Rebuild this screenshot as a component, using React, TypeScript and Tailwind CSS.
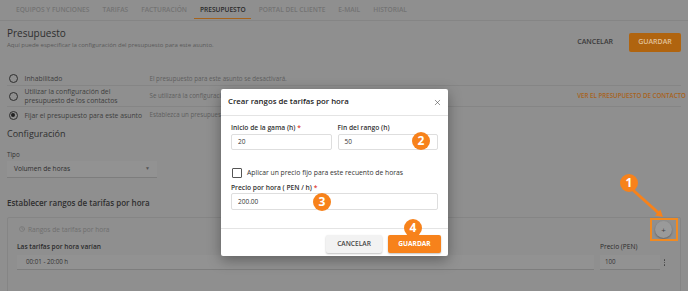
import { Clock, X } from "lucide-react";

const TABS = [
	"Equipos y funciones",
	"Tarifas",
	"Facturación",
	"Presupuesto",
	"Portal del cliente",
	"E-mail",
	"Historial",
];

const ACTIVE_TAB = "Presupuesto";

type RadioRowProps = {
	label: React.ReactNode;
	hint: string;
	checked?: boolean;
	className?: string;
	extra?: React.ReactNode;
};

function RadioRow({ label, hint, checked = false, className = "", extra }: RadioRowProps) {
	return (
		<div className={`flex items-center ${className}`}>
			<span className="ml-[1.5px] flex h-[9px] w-[9px] shrink-0 items-center justify-center rounded-full border-[1.2px] border-[#2e2e2e]">
				{checked && <span className="h-[4px] w-[4px] rounded-full bg-[#222]" />}
			</span>
			<span className="ml-[7px] w-[124px] shrink-0 text-[6.8px] leading-[9px] text-[#3e3e3e]">{label}</span>
			<span className="ml-[1px] whitespace-nowrap text-[6.2px] text-[#5e5e5e]">{hint}</span>
			{extra}
		</div>
	);
}

// numbered orange markers drawn over the screenshot
function Badge({ n, className }: { n: number; className: string }) {
	return (
		<span
			className={`absolute flex h-[18px] w-[18px] items-center justify-center rounded-full bg-[#f7821b] text-[12px] font-bold leading-none text-white ${className}`}
		>
			{n}
		</span>
	);
}

function ModalInput({ value, tall }: { value: string; tall?: boolean }) {
	return (
		<div
			className={`flex items-center rounded-[2px] border border-[#dedede] px-[6px] text-[6.5px] text-[#333] ${
				tall ? "h-[17px]" : "h-[16px]"
			}`}
		>
			{value}
		</div>
	);
}

function ModalLabel({ children, required }: { children: React.ReactNode; required?: boolean }) {
	return (
		<div className="text-[6.7px] font-semibold leading-[8px] text-[#333]">
			{children}
			{required && <span className="text-[#e0413a]"> *</span>}
		</div>
	);
}

export default function App() {
	return (
		<div className="relative h-[291px] w-[688px] overflow-hidden bg-[#8f8f8f] font-['Open_Sans',sans-serif]">
			{/* dimmed page underneath */}
			<div className="flex h-[21px] items-center gap-[13px] border-b border-[#858585] px-[16px]">
				{TABS.map((tab) => (
					<div
						key={tab}
						className={`relative flex h-full items-center text-[6.6px] font-semibold uppercase ${
							tab === ACTIVE_TAB ? "text-[#2a2a2a]" : "text-[#737373]"
						}`}
					>
						{tab}
						{tab === ACTIVE_TAB && (
							<span className="absolute -left-[6px] -right-[5px] bottom-[1px] h-[1.5px] bg-[#a5631c]" />
						)}
					</div>
				))}
			</div>

			<div className="flex items-start justify-between px-[7px] pt-[5px]">
				<div>
					<div className="text-[10px] leading-[14px] text-[#2e2e2e]">Presupuesto</div>
					<div className="mt-[1px] text-[6px] leading-[8px] text-[#5a5a5a]">
						Aquí puede especificar la configuración del presupuesto para este asunto.
					</div>
				</div>
				<div className="mt-[7px] flex items-center gap-[16px]">
					<span className="text-[7px] font-semibold text-[#3a3a3a]">CANCELAR</span>
					<span className="flex h-[19px] w-[52px] items-center justify-center rounded-[2px] bg-[#b0640f] text-[7px] font-semibold text-[#e2c29c]">
						GUARDAR
					</span>
				</div>
			</div>

			<div className="mx-[7px] mt-[20px]">
				<RadioRow className="h-[14px] border-b border-[#858585]" label="Inhabilitado" hint="El presupuesto para este asunto se desactivará." />
				<RadioRow
					className="h-[21px] border-b border-[#858585]"
					label={
						<>
							Utilizar la configuración del
							<br />
							presupuesto de los contactos
						</>
					}
					hint="Se utilizará la configuración del presupuesto de los contactos."
					extra={
						<span className="-mr-[5px] ml-auto self-start pt-[5px] text-[6.2px] font-semibold text-[#a8621b]">
							VER EL PRESUPUESTO DE CONTACTO
						</span>
					}
				/>
				<RadioRow
					className="h-[16px]"
					checked
					label="Fijar el presupuesto para este asunto"
					hint="Establezca un presupuesto para este asunto."
				/>
			</div>

			<div className="px-[7px]">
				<div className="mt-[5px] text-[9px] leading-[12px] text-[#2e2e2e]">Configuración</div>
				<div className="mt-[11px] text-[6.3px] leading-[8px] text-[#333]">Tipo</div>
				<div className="mt-[2px] flex h-[17px] w-[150px] items-center justify-between border-b border-[#7d7d7d] bg-[#929292] px-[7px] text-[6.6px] text-[#2e2e2e]">
					<span>Volumen de horas</span>
					<span className="text-[5px] text-[#555]">▼</span>
				</div>
				<div className="mt-[19px] text-[8px] font-semibold leading-[11px] text-[#2e2e2e]">
					Establecer rangos de tarifas por hora
				</div>
			</div>

			<div className="mx-[7px] mt-[9px] h-[120px] rounded-[2px] border border-[#858585] pl-[9px] pr-[14px] pt-[3px]">
				<div className="flex h-[17px] items-center justify-between">
					<div className="flex items-center gap-[3px] pl-[2px] text-[6.6px] text-[#6e6e6e]">
						<Clock size={6} strokeWidth={2} />
						Rangos de tarifas por hora
					</div>
					<span className="-mr-[6px] flex h-[17px] w-[17px] items-center justify-center rounded-full bg-[#9a9a9a] text-[8px] leading-none text-[#444] shadow-[0_1px_2px_rgba(0,0,0,0.3)]">
						+
					</span>
				</div>
				<div className="mt-[5px] flex items-end">
					<div className="flex-1">
						<div className="text-[6.6px] font-semibold leading-[8px] text-[#2a2a2a]">Las tarifas por hora varían</div>
						<div className="mt-[4px] flex h-[15px] items-center border-b border-[#7d7d7d] bg-[#929292] px-[9px] text-[6.2px] text-[#333]">
							00:01 - 20:00 h
						</div>
					</div>
					<div className="ml-[6px] w-[60px]">
						<div className="text-[6.6px] leading-[8px] text-[#2a2a2a]">Precio (PEN)</div>
						<div className="mt-[4px] flex h-[15px] items-center border-b border-[#7d7d7d] bg-[#929292] px-[5px] text-[6.2px] text-[#333]">
							100
						</div>
					</div>
					<div className="ml-[3px] flex h-[15px] w-[3px] flex-col items-center justify-center gap-[1px]">
						<span className="h-[1.5px] w-[1.5px] rounded-full bg-[#444]" />
						<span className="h-[1.5px] w-[1.5px] rounded-full bg-[#444]" />
						<span className="h-[1.5px] w-[1.5px] rounded-full bg-[#444]" />
					</div>
				</div>
			</div>

			{/* modal */}
			<div className="absolute left-[221px] top-[89px] flex w-[227px] flex-col rounded-[2px] bg-white shadow-[0_4px_14px_rgba(0,0,0,0.35)]">
				<div className="flex h-[27px] items-center justify-between border-b border-[#e4e4e4] pl-[7px] pr-[6px]">
					<span className="text-[7.8px] font-semibold text-[#222]">Crear rangos de tarifas por hora</span>
					<X size={9} strokeWidth={1.5} className="text-[#444]" />
				</div>
				<div className="px-[10px] pb-[18px] pt-[8px]">
					<div className="grid grid-cols-2 gap-x-[6px]">
						<div>
							<ModalLabel required>Inicio de la gama (h)</ModalLabel>
							<div className="mt-[2px]">
								<ModalInput value="20" />
							</div>
						</div>
						<div>
							<ModalLabel>Fin del rango (h)</ModalLabel>
							<div className="mt-[2px]">
								<ModalInput value="50" />
							</div>
						</div>
					</div>
					<div className="mt-[18px] flex items-center gap-[5px] pl-[1px]">
						<span className="h-[10px] w-[10px] rounded-[1px] border border-[#555]" />
						<span className="text-[6.8px] text-[#333]">Aplicar un precio fijo para este recuento de horas</span>
					</div>
					<div className="mt-[6px]">
						<ModalLabel required>Precio por hora ( PEN / h)</ModalLabel>
						<div className="mt-[1px]">
							<ModalInput value="200.00" tall />
						</div>
					</div>
				</div>
				<div className="flex justify-end gap-[6px] border-t border-[#e4e4e4] pb-[3px] pr-[7px] pt-[6px]">
					<span className="flex h-[18px] w-[56px] items-center justify-center rounded-[2px] bg-[#f2f2f2] text-[6.6px] font-semibold text-[#444] shadow-[0_1px_2px_rgba(0,0,0,0.25)]">
						CANCELAR
					</span>
					<span className="flex h-[18px] w-[53px] items-center justify-center rounded-[2px] bg-[#f7821b] text-[6.6px] font-bold text-white shadow-[0_1px_2px_rgba(0,0,0,0.25)]">
						GUARDAR
					</span>
				</div>
			</div>

			{/* annotations */}
			<span className="absolute left-[650px] top-[218px] h-[23px] w-[28px] border-2 border-[#f08a22]" />
			<svg className="absolute left-[620px] top-[175px]" width="60" height="50" viewBox="0 0 60 50">
				<line x1="14" y1="16" x2="38" y2="37.5" stroke="#f7821b" strokeWidth="3" strokeLinecap="round" />
				<polygon points="43,42 35.1,40.4 40.4,34.4" fill="#f7821b" />
			</svg>
			<Badge n={1} className="left-[620px] top-[174px]" />
			<Badge n={2} className="left-[412px] top-[132px]" />
			<Badge n={3} className="left-[313px] top-[193px]" />
			<Badge n={4} className="left-[404px] top-[219px]" />
		</div>
	);
}
